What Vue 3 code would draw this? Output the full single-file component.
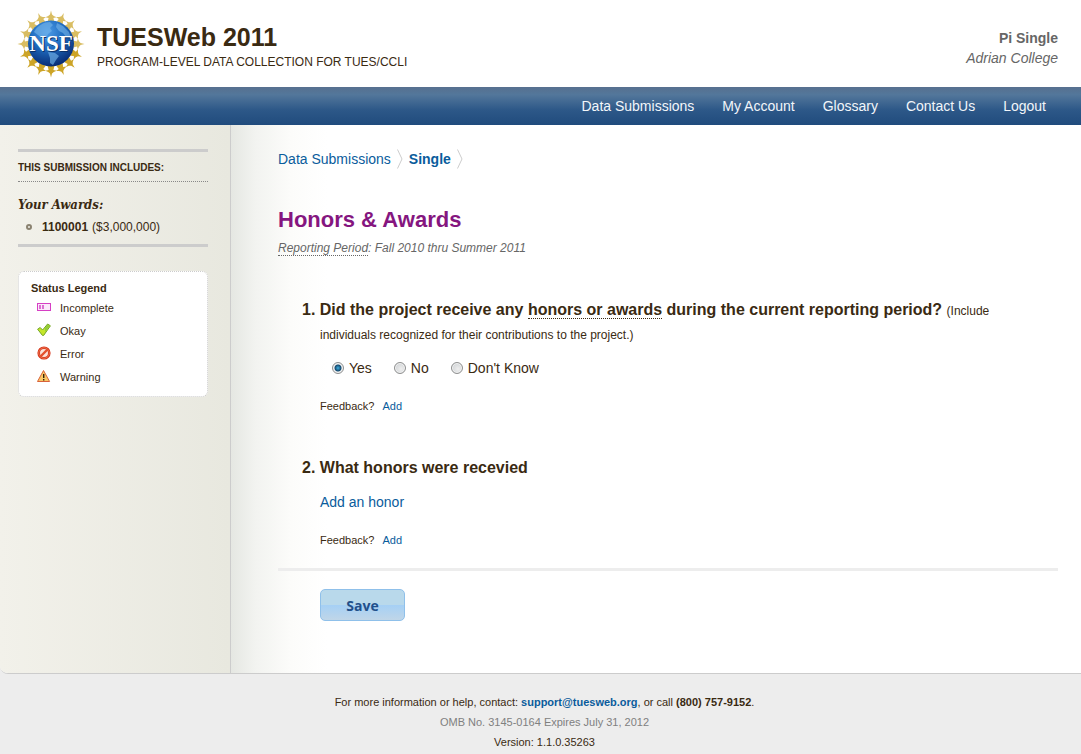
<template>
  <div class="page">
    <header class="header">
      <svg class="logo" viewBox="0 0 68 68" role="img" aria-label="NSF">
        <defs>
          <radialGradient id="globe" cx="0.42" cy="0.25" r="0.8">
            <stop offset="0" stop-color="#4d9be6" />
            <stop offset="0.45" stop-color="#1f6cc0" />
            <stop offset="1" stop-color="#06246b" />
          </radialGradient>
        </defs>
        <g v-for="n in 16" :key="n" :transform="`rotate(${n * 22.5} 34 34)`">
          <path
            d="M34 0.5 L35 4.4 L36.8 6 L39.6 7.2 L36.4 8 L37.4 12 H30.6 L31.6 8 L28.4 7.2 L31.2 6 L33 4.4 Z"
            :fill="n > 4 && n < 12 ? '#cda426' : '#d9bd62'"
          />
        </g>
        <circle cx="34" cy="33.5" r="23" fill="url(#globe)" />
        <path
          d="M17 22 C21 15 27 12 33 12 L36 15 L33 18 L35 21 L31 24 L29 29 L25 28 L21 25 Z M40 13 L46 16 L52 22 L54 28 L49 27 L46 23 L42 21 L39 17 Z M31 42 L38 43 L42 46 L39 50 L36 55 L33 53 L33 48 Z"
          fill="#72b2e8"
          opacity="0.65"
        />
        <text class="logo-shadow" x="35" y="42" text-anchor="middle">NSF</text>
        <text class="logo-text" x="34" y="41" text-anchor="middle">NSF</text>
      </svg>
      <div class="brand">
        <h1>TUESWeb 2011</h1>
        <p>PROGRAM-LEVEL DATA COLLECTION FOR TUES/CCLI</p>
      </div>
      <div class="user">
        <strong>Pi Single</strong>
        <em>Adrian College</em>
      </div>
    </header>

    <nav class="nav">
      <a v-for="item in navItems" :key="item" href="#">{{ item }}</a>
    </nav>

    <div class="body">
      <aside class="sidebar">
        <section class="submission">
          <h2>THIS SUBMISSION INCLUDES:</h2>
          <h3>Your Awards:</h3>
          <ul>
            <li v-for="award in awards" :key="award.id">
              <strong>{{ award.id }}</strong> ({{ award.amount }})
            </li>
          </ul>
        </section>

        <section class="legend">
          <h2>Status Legend</h2>
          <ul>
            <li>
              <svg viewBox="0 0 14 14">
                <rect x="0.5" y="3.5" width="13" height="7" fill="#fbe9fa" stroke="#d63fc4" />
                <path d="M2 5h2v4H2z M5 5h2v4H5z" fill="#dc6fd2" />
              </svg>
              Incomplete
            </li>
            <li>
              <svg viewBox="0 0 14 14">
                <path
                  d="M0.6 6.2 L3.2 4.5 L5.6 7 L10.6 1 L13.4 2.8 L6.7 12.4 H5.4 Z"
                  fill="#c4e62a"
                  stroke="#75a62b"
                />
                <path d="M8 5 L10.7 1.8 L12.5 3 L8 9 Z" fill="#8fcb3a" />
              </svg>
              Okay
            </li>
            <li>
              <svg viewBox="0 0 14 14">
                <circle cx="7" cy="7" r="5.3" fill="#fbe3da" stroke="#d5341a" stroke-width="2.6" />
                <circle cx="7" cy="7" r="5.3" fill="none" stroke="#f4825a" stroke-width="0.8" />
                <path d="M3.5 10.5 L10.5 3.5" stroke="#e4502c" stroke-width="2.4" />
              </svg>
              Error
            </li>
            <li>
              <svg viewBox="0 0 14 14">
                <path
                  d="M6.5 1.5 L12.6 12.5 H0.5 Z"
                  fill="#f9c765"
                  stroke="#d9623a"
                  stroke-linejoin="round"
                />
                <path d="M6 5h1.4v4H6z M6 10h1.4v1.4H6z" fill="#32200c" />
              </svg>
              Warning
            </li>
          </ul>
        </section>
      </aside>

      <main class="content">
        <div class="breadcrumb">
          <a href="#">Data Submissions</a>
          <svg viewBox="0 0 6 20"><path d="M0.5 0.5 L5 10 L0.5 19.5" /></svg>
          <a href="#" class="current">Single</a>
          <svg viewBox="0 0 6 20"><path d="M0.5 0.5 L5 10 L0.5 19.5" /></svg>
        </div>

        <h2 class="title">Honors &amp; Awards</h2>
        <p class="period"><span class="term">Reporting Period</span>: Fall 2010 thru Summer 2011</p>

        <form @submit.prevent>
          <ol class="questions">
            <li>
              <p class="question" id="q1">
                <b>Did the project receive any <span class="term">honors or awards</span> during the
                current reporting period?</b> <small>(Include individuals recognized for their
                contributions to the project.)</small>
              </p>
              <div class="options" role="radiogroup" aria-labelledby="q1">
                <label v-for="option in options" :key="option">
                  <input v-model="received" type="radio" name="received" :value="option" />
                  {{ option }}
                </label>
              </div>
              <p class="feedback">Feedback? <a href="#">Add</a></p>
            </li>
            <li>
              <p class="question"><b>What honors were recevied</b></p>
              <a href="#" class="add">Add an honor</a>
              <p class="feedback">Feedback? <a href="#">Add</a></p>
            </li>
          </ol>
          <div class="actions">
            <button type="submit">Save</button>
          </div>
        </form>
      </main>
    </div>

    <footer class="footer">
      <p>
        For more information or help, contact:
        <a href="mailto:support@tuesweb.org">support@tuesweb.org</a>, or call
        <strong>(800) 757-9152</strong>.
      </p>
      <p class="omb">OMB No. 3145-0164 Expires July 31, 2012</p>
      <p>Version: 1.1.0.35263</p>
    </footer>
  </div>
</template>

<script setup>
import { ref } from 'vue'

const navItems = ['Data Submissions', 'My Account', 'Glossary', 'Contact Us', 'Logout']

const awards = [{ id: '1100001', amount: '$3,000,000' }]

const options = ['Yes', 'No', "Don't Know"]
const received = ref('Yes')
</script>

<style>
body {
  background: #ededed;
}
</style>

<style scoped>
.page {
  color: #3a2a12;
  font-family: 'Liberation Sans', Arial, sans-serif;
  font-size: 14px;
  line-height: 20px;
}

h1,
h2,
h3,
p,
ul,
ol {
  margin: 0;
  padding: 0;
}

a {
  color: #0a5c9c;
  text-decoration: none;
}

.header {
  display: flex;
  align-items: flex-start;
  height: 77px;
  padding: 10px 23px 0 17px;
  background: #fff;
}

.logo {
  width: 68px;
  height: 68px;
}

.logo-text,
.logo-shadow {
  font-family: 'Liberation Serif', serif;
  font-size: 23px;
  font-weight: bold;
  fill: #fff;
}

.logo-shadow {
  fill: #0b2f66;
}

.brand {
  padding: 12px 0 0 12px;
}

.brand h1 {
  font-size: 25px;
  line-height: 30px;
}

.brand p {
  font-size: 12px;
}

.user {
  display: flex;
  flex-direction: column;
  margin-left: auto;
  padding-top: 18px;
  color: #666;
  text-align: right;
}

.nav {
  display: flex;
  justify-content: flex-end;
  gap: 28px;
  padding: 9px 35px 9px 0;
  background: linear-gradient(#57708f, #53779b 20%, #2d5888 60%, #204b7d);
}

.nav a {
  color: #f2f6fa;
}

.body {
  display: flex;
  overflow: hidden;
  border-bottom: 1px solid #ccc;
  border-bottom-left-radius: 8px;
  background: #fff;
}

.sidebar {
  box-sizing: border-box;
  flex: 0 0 231px;
  padding: 24px 22px 0 18px;
  border-right: 1px solid #ccc;
  background: linear-gradient(to right, #f2f1ea, #e8e8df);
}

.submission {
  padding: 6px 0 7px;
  border-top: 3px solid #ccc;
  border-bottom: 3px solid #ccc;
}

.submission h2 {
  padding-bottom: 3px;
  border-bottom: 1px dotted #888;
  font-size: 10px;
}

.submission h3 {
  margin-top: 13px;
  font-family: 'DejaVu Serif Condensed', 'DejaVu Serif', Georgia, serif;
  font-size: 13px;
  font-style: italic;
}

.submission ul {
  list-style: none;
}

.submission li {
  display: flex;
  align-items: center;
  gap: 4px;
  margin-top: 2px;
  padding-left: 8px;
  font-size: 12px;
}

.submission li::before {
  width: 2px;
  height: 2px;
  margin-right: 6px;
  border: 2px solid #8a8270;
  border-radius: 50%;
  content: '';
}

.legend {
  margin-top: 24px;
  padding: 6px 12px 7px;
  border: 1px dotted #ccc;
  border-radius: 6px;
  background: #fff;
  font-size: 11px;
}

.legend h2 {
  font-size: 11px;
}

.legend ul {
  margin-top: -1px;
  list-style: none;
}

.legend li {
  display: flex;
  align-items: center;
  gap: 9px;
  padding-left: 6px;
  line-height: 23px;
}

.legend svg {
  width: 14px;
  height: 14px;
  margin-bottom: 4px;
}

.content {
  flex: 1;
  min-width: 0;
  padding: 24px 23px 52px 47px;
  background: linear-gradient(to right, #e5e7e2, #f2f3f0 24px, #fcfcfa 60px, #fff 96px);
}

.breadcrumb {
  display: flex;
  gap: 6px;
}

.breadcrumb svg {
  width: 6px;
  height: 20px;
  fill: none;
  stroke: #ccc;
}

.current {
  font-weight: bold;
}

.title {
  margin-top: 36px;
  color: #85167f;
  font-size: 22px;
  line-height: 30px;
}

.period {
  margin-top: 3px;
  color: #666;
  font-size: 12px;
  font-style: italic;
}

.term {
  border-bottom: 1px dotted currentColor;
}

.questions {
  display: flex;
  flex-direction: column;
  gap: 40px;
  margin-top: 40px;
  padding: 0 24px 18px 42px;
  border-bottom: 3px solid #ededed;
  list-style: none;
  counter-reset: question;
}

.questions li {
  counter-increment: question;
}

.question {
  font-size: 16px;
  line-height: 24px;
}

.question small {
  font-size: 12px;
  line-height: 12px;
}

.question b::before {
  margin-left: -18px;
  content: counter(question) '. ';
}

.options {
  display: flex;
  gap: 22px;
  margin-top: 12px;
  padding-left: 12px;
}

.options label {
  display: flex;
  align-items: center;
  gap: 5px;
}

.options input {
  width: 12px;
  height: 12px;
  margin: 0;
  border: 1px solid #8e8f8f;
  border-radius: 50%;
  appearance: none;
  background: radial-gradient(circle at 60% 60%, #eee, #c8cccf);
  box-shadow: inset 0 0 0 1px #f4f4f4;
}

.options input:checked {
  background: radial-gradient(circle, #3fb0e0 0, #164a70 3px, #e4e8ea 4px);
}

.feedback {
  margin-top: 18px;
  font-size: 11px;
}

.feedback a {
  margin-left: 5px;
}

.add {
  display: block;
  margin-top: 12px;
}

.actions {
  padding: 18px 0 0 42px;
}

button {
  display: block;
  width: 85px;
  height: 32px;
  border: 1px solid #8fc0ea;
  border-radius: 5px;
  background: linear-gradient(#b9d9eb 50%, #a5d0f5 50%, #c0d6e8);
  color: #22508a;
  font-family: 'Open Sans', 'Noto Sans', sans-serif;
  font-size: 14px;
  font-weight: bold;
}

.footer {
  padding: 18px 0 2px 8px;
  font-size: 11px;
  text-align: center;
}

.footer a {
  font-weight: bold;
}

.omb {
  color: #808080;
}
</style>
